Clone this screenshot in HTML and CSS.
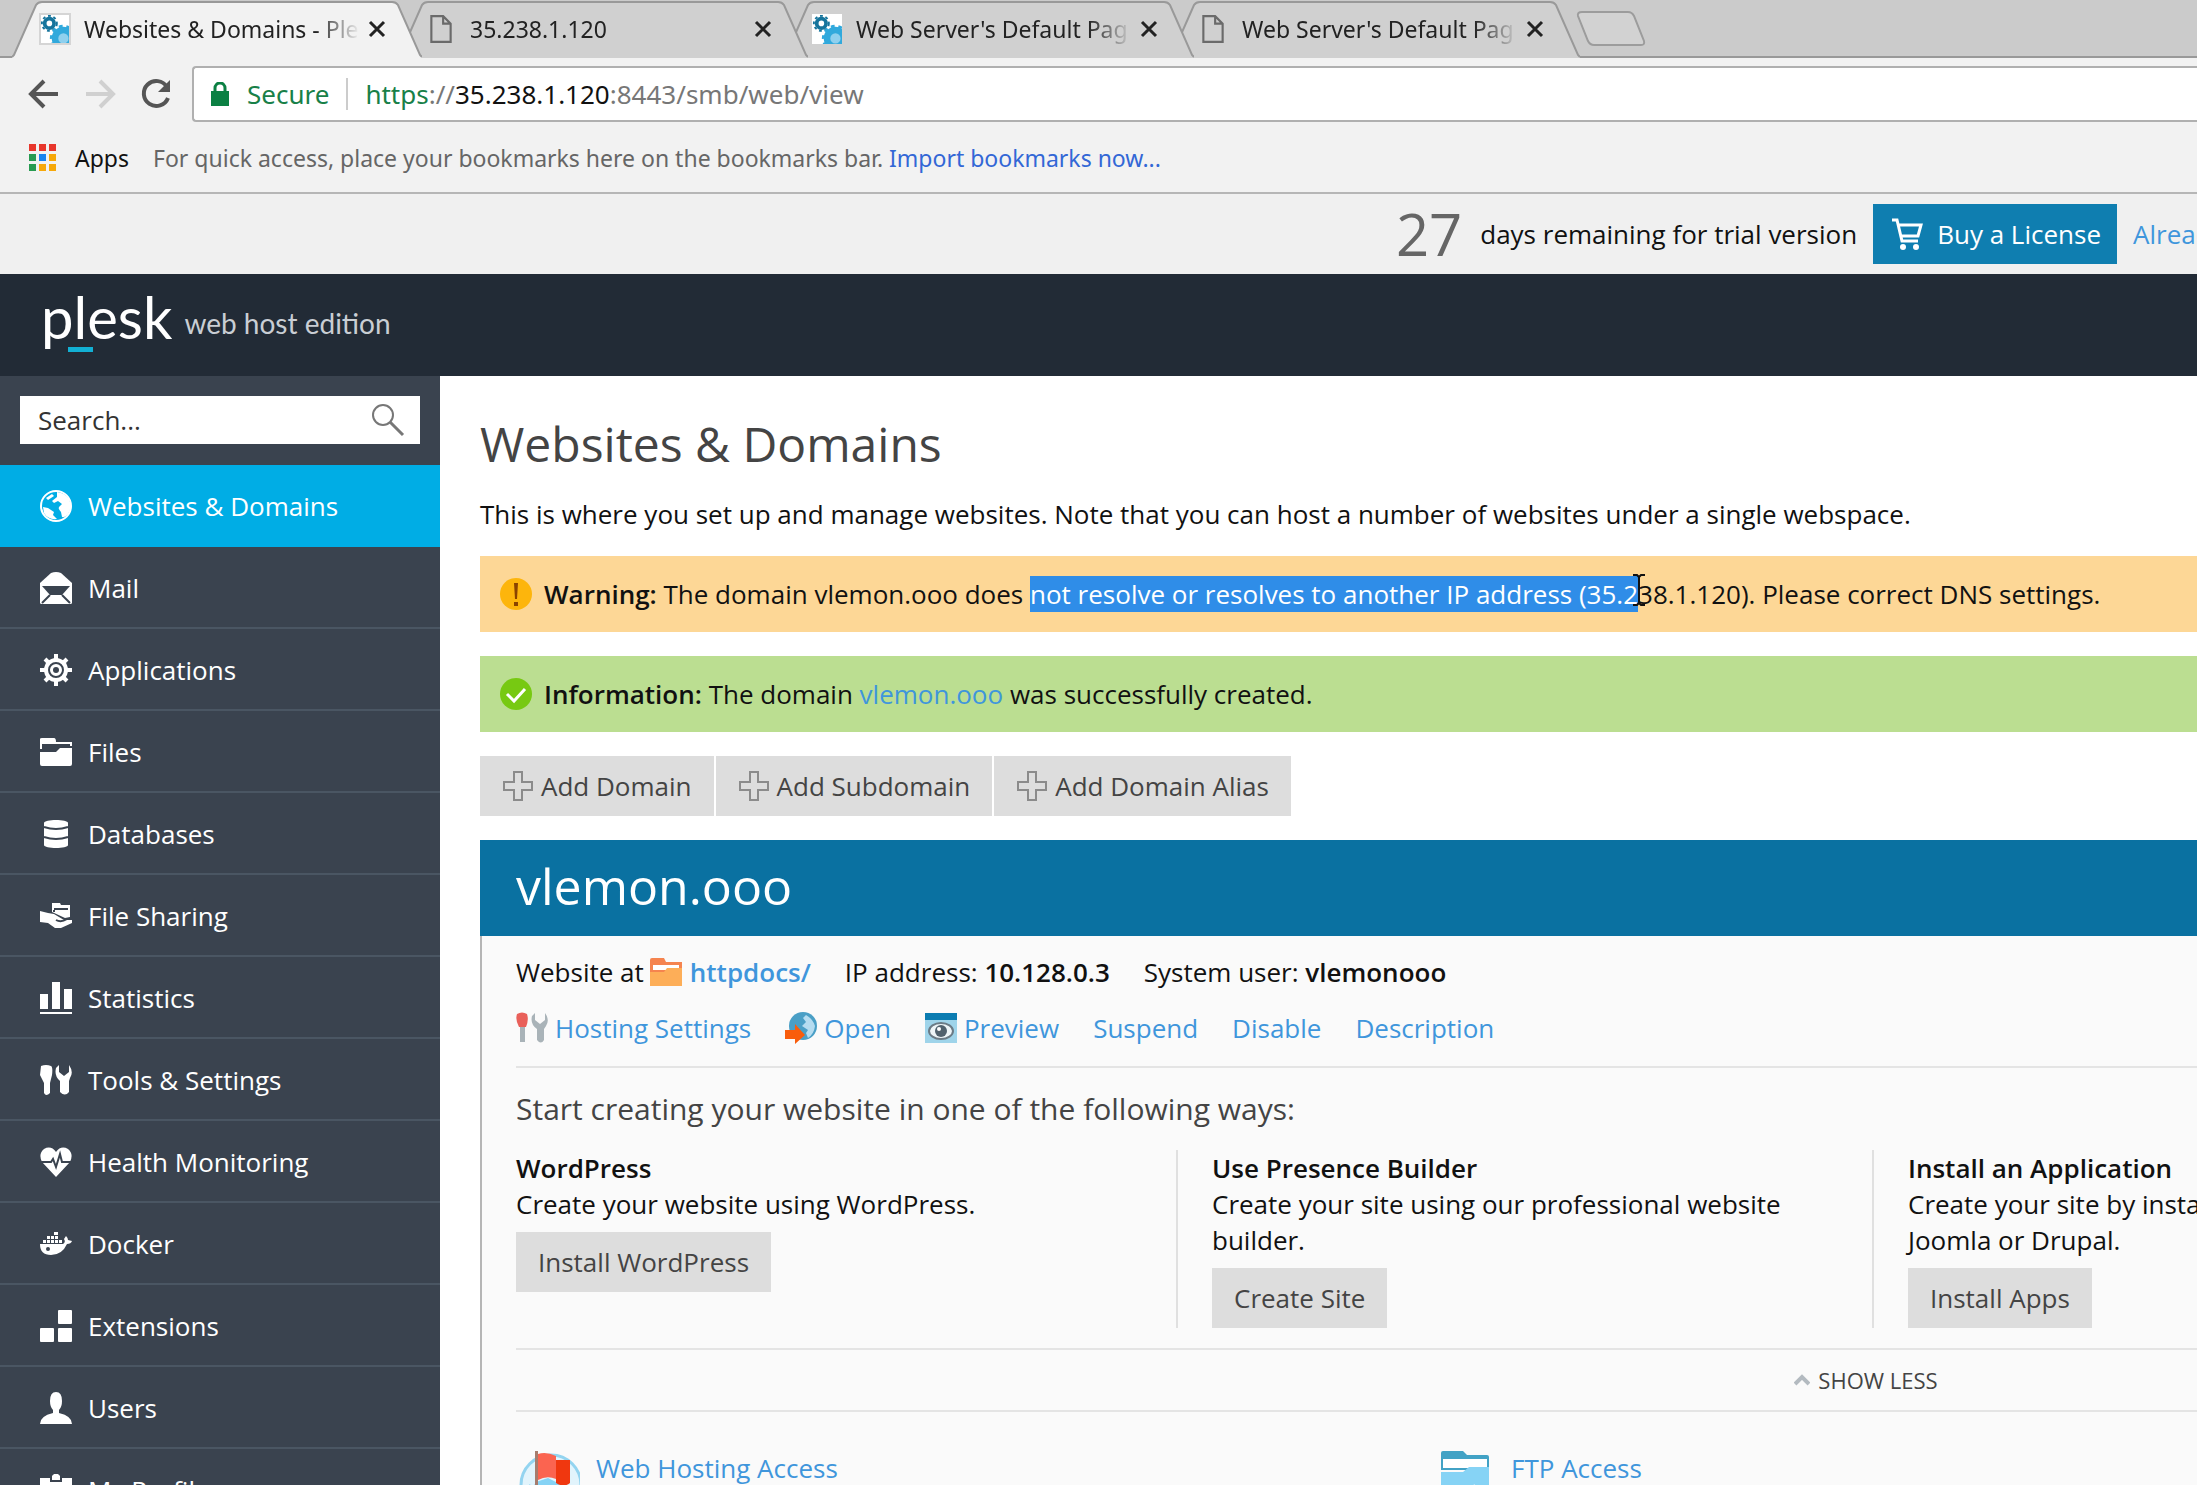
FILE: index.html
```html
<!DOCTYPE html>
<html lang="en">
<head>
<meta charset="utf-8">
<title>Websites &amp; Domains - Plesk</title>
<link rel="stylesheet" href="styles.css">
</head>
<body>
<svg class="sprite" aria-hidden="true">
  <symbol id="tab-shape" viewBox="0 0 410 58" preserveAspectRatio="none">
    <path d="M0 57 L2 55 L24 5 Q26 2 30 2 H380 Q384 2 386 5 L408 55 L410 57 V58 H0Z" fill="currentColor"/>
    <path d="M0 57 L2 55 L24 5 Q26 2 30 2 H380 Q384 2 386 5 L408 55 L410 57" fill="none" stroke="#999" stroke-width="2"/>
  </symbol>
  <symbol id="gears" viewBox="0 0 32 32">
    <path d="M0 0H32V32H0Z" fill="#fff"/>
    <circle cx="10" cy="10" r="5" fill="none" stroke="#15749c" stroke-width="4"/>
    <circle cx="10" cy="10" r="8" fill="none" stroke="#15749c" stroke-width="2" stroke-dasharray="3 3"/>
    <circle cx="25" cy="26" r="9" fill="#8fd0ee" stroke="#31a9dc" stroke-width="7"/>
    <circle cx="25" cy="26" r="13" fill="none" stroke="#31a9dc" stroke-width="3" stroke-dasharray="4 4"/>
  </symbol>
  <symbol id="page" viewBox="0 0 22 28"><path d="M2 2H13L20 9V26H2ZM13 2V9H20" fill="none" stroke="#6a6a6a" stroke-width="2"/></symbol>
  <symbol id="close" viewBox="0 0 18 18"><path d="M2 2L16 16M16 2L2 16" stroke="currentColor" stroke-width="3"/></symbol>
  <symbol id="plus" viewBox="0 0 32 32"><path d="M12 2H20V12H30V20H20V30H12V20H2V12H12Z" fill="none" stroke="#8b8b8b" stroke-width="2"/></symbol>
</svg>

<header class="browser">
  <div class="tabs">
    <div class="tab tab-active">
      <svg class="tab-bg"><use href="#tab-shape"/></svg>
      <svg class="fav fav-framed"><use href="#gears"/></svg>
      <span class="tab-title">Websites &amp; Domains - Ple</span>
      <button class="tab-close" aria-label="Close tab"><svg><use href="#close"/></svg></button>
    </div>
    <div class="tab">
      <svg class="tab-bg"><use href="#tab-shape"/></svg>
      <svg class="fav"><use href="#page"/></svg>
      <span class="tab-title">35.238.1.120</span>
      <button class="tab-close" aria-label="Close tab"><svg><use href="#close"/></svg></button>
    </div>
    <div class="tab">
      <svg class="tab-bg"><use href="#tab-shape"/></svg>
      <svg class="fav"><use href="#gears"/></svg>
      <span class="tab-title">Web Server's Default Pag</span>
      <button class="tab-close" aria-label="Close tab"><svg><use href="#close"/></svg></button>
    </div>
    <div class="tab">
      <svg class="tab-bg"><use href="#tab-shape"/></svg>
      <svg class="fav"><use href="#page"/></svg>
      <span class="tab-title">Web Server's Default Pag</span>
      <button class="tab-close" aria-label="Close tab"><svg><use href="#close"/></svg></button>
    </div>
    <button class="new-tab" aria-label="New tab"><svg viewBox="0 0 70 36"><path d="M6 1H52Q56 1 58 5L68 30Q69 34 65 34H18Q14 34 12 30L2 5Q1 1 6 1Z" fill="#d2d2d2" stroke="#9c9c9c" stroke-width="2"/></svg></button>
  </div>
  <div class="toolbar">
    <button class="nav-btn" aria-label="Back"><svg viewBox="0 0 32 32"><path d="M30 16H4M16 3L3 16L16 29" fill="none" stroke="#555" stroke-width="4"/></svg></button>
    <button class="nav-btn" aria-label="Forward"><svg viewBox="0 0 32 32"><path d="M2 16H28M16 3L29 16L16 29" fill="none" stroke="#d0d0d0" stroke-width="4"/></svg></button>
    <button class="nav-btn" aria-label="Reload"><svg viewBox="0 0 32 32"><path d="M27 9A12.500 12.500 0 1 0 28 20" fill="none" stroke="#555" stroke-width="4"/><path d="M30 2V14H18Z" fill="#555"/></svg></button>
    <div class="address">
      <svg class="lock" viewBox="0 0 18 24"><path d="M0 9H18V24H0Z" fill="#0b8043"/><path d="M4 10V6A5 5 0 0 1 14 6V10" fill="none" stroke="#0b8043" stroke-width="3"/></svg>
      <span class="secure">Secure</span>
      <span class="url"><span class="scheme">https</span>://<span class="host">35.238.1.120</span>:8443/smb/web/view</span>
    </div>
  </div>
  <div class="bookmarks">
    <svg class="apps" viewBox="0 0 28 28"><path d="M0 0H7V7H0ZM10 0H17V7H10ZM20 0H27V7H20Z" fill="#e8372c"/><path d="M0 10H7V17H0ZM0 20H7V27H0Z" fill="#279b51"/><path d="M10 10H17V17H10Z" fill="#1a84ee"/><path d="M20 10H27V17H20ZM10 20H17V27H10ZM20 20H27V27H20Z" fill="#f6a80a"/></svg>
    <span class="apps-label">Apps</span>
    <span class="hint">For quick access, place your bookmarks here on the bookmarks bar. <a href="#">Import bookmarks now...</a></span>
  </div>
</header>

<div class="trial">
  <span class="days">27</span>
  <span class="remaining">days remaining for trial version</span>
  <button class="buy"><svg viewBox="0 0 32 34"><path d="M1 3H6L11 24H27M7 8H30L27 19H10" fill="none" stroke="#fff" stroke-width="3"/><circle cx="12" cy="30" r="3" fill="#fff"/><circle cx="25" cy="30" r="3" fill="#fff"/></svg>Buy a License</button>
  <a class="already" href="#">Already have a license?</a>
</div>

<div class="brand">
  <span class="logo">p<span class="logo-l">l</span>esk</span>
  <span class="edition">web host edition</span>
</div>

<div class="body">
  <aside class="sidebar">
    <form class="search">
      <input type="text" placeholder="Search..." aria-label="Search">
      <svg viewBox="0 0 34 34"><circle cx="12" cy="12" r="10" fill="none" stroke="#777" stroke-width="2"/><path d="M19 19L32 32" stroke="#777" stroke-width="3"/></svg>
    </form>
    <nav>
      <a class="item current" href="#"><svg viewBox="0 0 32 32"><circle cx="16" cy="16" r="15" fill="none" stroke="#fff" stroke-width="2"/><path d="M17 2Q25 3 29 9Q32 16 29 22Q26 28 22 27L21 22Q17 18 20 16L22 14L18 11L14 13L12 11L17 7Z" fill="#fff"/><path d="M3 17L8 18L14 22L13 25L17 29Q8 30 4 23ZM6 8L12 4L14 6L8 10Z" fill="#fff"/></svg>Websites &amp; Domains</a>
      <a class="item" href="#"><svg viewBox="0 0 32 32"><path d="M0 11L11 1Q16 -1 21 1L32 11V31Q32 32 30 32H2Q0 32 0 31Z" fill="#fff"/><path d="M2 14H30L22 23H10Z" fill="#3a434f"/><path d="M10 23L2 31M22 23L30 31" stroke="#3a434f" stroke-width="2"/></svg>Mail</a>
      <a class="item" href="#"><svg viewBox="0 0 32 32"><g stroke="#fff" stroke-width="4"><path d="M16 0V32M0 16H32M5 5L27 27M27 5L5 27"/></g><circle cx="16" cy="16" r="12" fill="#fff"/><circle cx="16" cy="16" r="7" fill="#fff" stroke="#3a434f" stroke-width="2"/><circle cx="16" cy="16" r="3" fill="#3a434f"/></svg>Applications</a>
      <a class="item" href="#"><svg viewBox="0 0 32 32"><path d="M0 13V3Q0 2 2 2H14Q16 2 16 6H32V10H30V8H2V13Z" fill="#fff"/><path d="M0 16H16L20 12H32V28Q32 30 30 30H2Q0 30 0 28Z" fill="#fff"/></svg>Files</a>
      <a class="item" href="#"><svg viewBox="0 0 32 32"><path d="M4 5C4 1 28 1 28 5V27C28 31 4 31 4 27Z" fill="#fff"/><path d="M4 9Q16 13 28 9M4 19Q16 23 28 19" fill="none" stroke="#3a434f" stroke-width="2"/></svg>Databases</a>
      <a class="item" href="#"><svg viewBox="0 0 32 32"><path d="M0 11L8 13L14 14L24 20L32 20V23L21 28H15L8 23L0 22Z" fill="#fff"/><path d="M12 3H20L21 5H30V17L25 18L12 12Z" fill="#fff"/><path d="M14 9H28M14 10V12M16 20Q21 23 27 19" stroke="#3a434f" stroke-width="2" fill="none"/></svg>File Sharing</a>
      <a class="item" href="#"><svg viewBox="0 0 32 32"><path d="M0 12H8V27H0ZM12 0H20V27H12ZM24 7H32V27H24ZM0 30H32V32H0Z" fill="#fff"/></svg>Statistics</a>
      <a class="item" href="#"><svg viewBox="0 0 32 32"><path d="M1 2Q6 0 11 2Q13 3 12 11L10 19V29Q6 33 4 29V19L0 11ZM19 1V8L24 12L29 8V1Q34 8 30 14L29 17V28Q25 33 20 28V17Q14 12 16 4Z" fill="#fff"/></svg>Tools &amp; Settings</a>
      <a class="item" href="#"><svg viewBox="0 0 32 32"><path d="M16 31L2 16Q-2 8 4 3Q11 -1 16 6Q21 -1 28 3Q34 8 30 16Z" fill="#fff"/><path d="M1 16H11L13 13L16 21L20 8L22 16H31" fill="none" stroke="#3a434f" stroke-width="2"/></svg>Health Monitoring</a>
      <a class="item" href="#"><svg viewBox="0 0 32 32"><path d="M0 16H23Q26 14 24 11L26 8Q28 10 28 12L32 13Q31 16 27 16Q22 27 11 27Q0 27 0 16Z" fill="#fff"/><path d="M3 12H6V15H3ZM7 12H10V15H7ZM11 12H14V15H11ZM15 12H18V15H15ZM19 12H22V15H19ZM7 8H10V11H7ZM11 8H14V11H11ZM15 8H18V11H15ZM14 4H18V7H14Z" fill="#fff"/><circle cx="8" cy="21" r="2" fill="#3a434f"/></svg>Docker</a>
      <a class="item" href="#"><svg viewBox="0 0 32 32"><g fill="#fff"><rect x="18" y="0" width="14" height="14" rx="1"/><rect x="0" y="18" width="14" height="14" rx="1"/><rect x="18" y="18" width="14" height="14" rx="1"/></g></svg>Extensions</a>
      <a class="item" href="#"><svg viewBox="0 0 32 32"><path d="M16 0Q22 0 22 9Q22 15 19 18V21Q32 24 32 32H0Q0 24 13 21V18Q10 15 10 9Q10 0 16 0Z" fill="#fff"/></svg>Users</a>
      <a class="item" href="#"><svg viewBox="0 0 32 32"><path d="M0 4H10V8H22V4H32V32H0Z" fill="#fff"/><path d="M12 2Q16 -3 20 2V6H12Z" fill="#fff"/><path d="M4 12H28V28H4Z" fill="#3a434f"/></svg>My Profile</a>
    </nav>
  </aside>

  <main class="main">
    <h1>Websites &amp; Domains</h1>
    <p class="intro">This is where you set up and manage websites. Note that you can host a number of websites under a single webspace.</p>

    <div class="msg warning">
      <svg viewBox="0 0 32 32"><circle cx="16" cy="16" r="16" fill="#fdb50c"/><path d="M14 5H18L17 21H15ZM14 24H18V28H14Z" fill="#8a4300"/></svg>
      <p><b>Warning:</b> The domain vlemon.ooo does <span class="selected">not resolve or resolves to another IP address (35.2<svg class="ibeam" viewBox="0 0 14 32"><path d="M1 1H5L7 3L9 1H13M7 3V29M1 31H5L7 29L9 31H13" fill="none" stroke="#111" stroke-width="2"/></svg></span>38.1.120). Please correct DNS settings.</p>
    </div>
    <div class="msg info">
      <svg viewBox="0 0 32 32"><circle cx="16" cy="16" r="16" fill="#77c912"/><path d="M7 16L14 23L25 11" fill="none" stroke="#fff" stroke-width="3"/></svg>
      <p><b>Information:</b> The domain <a href="#">vlemon.ooo</a> was successfully created.</p>
    </div>

    <div class="actions">
      <button class="btn"><svg><use href="#plus"/></svg>Add Domain</button>
      <button class="btn"><svg><use href="#plus"/></svg>Add Subdomain</button>
      <button class="btn"><svg><use href="#plus"/></svg>Add Domain Alias</button>
    </div>

    <section class="domain">
      <h2>vlemon.ooo</h2>
      <div class="panel">
        <div class="facts">
          <span class="fact">Website at<svg viewBox="0 0 32 32"><path d="M0 4Q0 2 2 2H14L16 6H32V16H0Z" fill="#f5844f"/><path d="M3 9H29V14H3Z" fill="#fff"/><path d="M0 16H14L17 12H32V30H0Z" fill="#fdae58"/></svg><a href="#"><b>httpdocs/</b></a></span>
          <span class="fact">IP address: <b>10.128.0.3</b></span>
          <span class="fact">System user: <b>vlemonooo</b></span>
        </div>
        <div class="links">
          <a href="#"><svg viewBox="0 0 32 32"><path d="M1 2Q6 -1 11 2Q13 8 10 15H3Q-1 8 1 2Z" fill="#e9605a"/><path d="M4 15H9V30H4ZM19 1V8L24 12L29 8V1Q34 8 30 14L28 17V28Q25 33 21 28V17Q14 12 16 4Z" fill="#a9b3b8"/></svg>Hosting Settings</a>
          <a href="#"><svg viewBox="0 0 32 32"><circle cx="18" cy="14" r="14" fill="#4a9fc6"/><path d="M21 3Q28 7 30 14Q29 22 23 26L21 21L23 18L17 14L21 10L18 6Z" fill="#b5dcf0"/><path d="M0 18H10V12L20 23L10 32V27H0Z" fill="#f95d0c"/></svg>Open</a>
          <a href="#"><svg viewBox="0 0 32 32"><path d="M0 1H32V31H0Z" fill="#9fd4ea"/><path d="M0 1H32V8H0Z" fill="#0b7cb1"/><ellipse cx="16" cy="19" rx="12" ry="8" fill="#eef5f8" stroke="#6b7b86" stroke-width="2"/><circle cx="16" cy="19" r="6" fill="#51626e"/><circle cx="14" cy="17" r="2" fill="#fff"/></svg>Preview</a>
          <a href="#">Suspend</a>
          <a href="#">Disable</a>
          <a href="#">Description</a>
        </div>
        <h3>Start creating your website in one of the following ways:</h3>
        <div class="ways">
          <div class="way"><b>WordPress</b><p>Create your website using WordPress.</p><button class="btn">Install WordPress</button></div>
          <div class="way"><b>Use Presence Builder</b><p>Create your site using our professional website builder.</p><button class="btn">Create Site</button></div>
          <div class="way"><b>Install an Application</b><p>Create your site by installing apps like WordPress, Joomla or Drupal.</p><button class="btn">Install Apps</button></div>
        </div>
        <button class="less"><svg viewBox="0 0 16 12"><path d="M1 10L8 3L15 10" fill="none" stroke="#b3bac0" stroke-width="4"/></svg>SHOW LESS</button>
        <div class="tools">
          <a href="#"><svg viewBox="0 0 64 64"><circle cx="35" cy="35" r="30" fill="#e2f4fc" stroke="#93d4f0" stroke-width="3"/><path d="M20 32L32 28L44 34L52 48L36 64H24L12 46ZM8 40L14 34L18 46Z" fill="#86d3f5"/><path d="M19 1H22V64H19Z" fill="#a67c6d"/><path d="M22 4Q30 1 40 6V29Q31 25 22 30Z" fill="#fb6450"/><path d="M40 10H54V33Q48 38 40 33Z" fill="#f0370f"/></svg>Web Hosting Access</a>
          <a href="#"><svg viewBox="0 0 64 64"><path d="M10 3Q10 1 12 1H32L36 5H56Q58 5 58 7V20H10Z" fill="#42a2c5"/><path d="M12 9H56V18H12Z" fill="#fff"/><path d="M10 22H32L38 17H58V58H10Z" fill="#86d3f5"/><path d="M25 40L33 49L45 36" fill="none" stroke="#fff" stroke-width="5"/></svg>FTP Access</a>
        </div>
      </div>
    </section>
  </main>
</div>
</body>
</html>
```
FILE: styles.css
```css
* { box-sizing: border-box; }
body { margin: 0; height: 100vh; overflow: hidden; font: 26px/36px "Open Sans", sans-serif; color: #111; background: #fff; }
h1, h2, h3, p { margin: 0; font-weight: 400; }
b { font-weight: 600; }
a { color: #3f96dc; text-decoration: none; }
button { font: inherit; color: inherit; border: 0; padding: 0; background: none; }
svg { flex: none; }
.sprite { position: absolute; width: 0; height: 0; }

/* Browser window */
.browser { background: #f2f2f2; border-bottom: 2px solid #b6b6b6; font: 23px/32px "Noto Sans", sans-serif; }
.tabs { display: flex; height: 58px; padding-left: 12px; background: #cbcbcb; box-shadow: inset 0 -2px #999; }
.tab { position: relative; display: flex; align-items: center; width: 410px; height: 58px; padding: 0 36px 0 28px; color: #d0d0d0; }
.tab + .tab { margin-left: -24px; }
.tab:nth-child(1) { z-index: 4; }
.tab:nth-child(2) { z-index: 3; }
.tab:nth-child(3) { z-index: 2; }
.tab:nth-child(4) { z-index: 1; }
.tab-active { color: #f2f2f2; }
.tab-bg { position: absolute; left: 0; top: 0; width: 100%; height: 100%; z-index: -1; }
.fav { width: 30px; height: 30px; margin-right: 14px; }
.fav-framed { outline: 2px solid #d5d5d5; outline-offset: -1px; }
.tab-title { flex: 1; white-space: nowrap; min-width: 0; color: #222; mask-image: linear-gradient(to right, #000 calc(100% - 44px), transparent); }
.tab-close { margin-left: 8px; color: #222; display: flex; }
.tab-close svg { width: 18px; height: 18px; }
.new-tab { display: flex; align-items: center; margin: 0 0 0 -4px; }
.new-tab svg { width: 70px; height: 36px; }
.toolbar { display: flex; align-items: center; gap: 24px; padding: 8px 0 8px 28px; }
.nav-btn { display: flex; }
.nav-btn svg { width: 32px; height: 32px; }
.address { flex: 1; display: flex; align-items: center; height: 56px; margin-left: -4px; padding-left: 17px; background: #fff; border: 2px solid #b0b0b0; border-right: 0; border-radius: 4px 0 0 4px; font-size: 26px; }
.lock { width: 18px; height: 24px; margin-right: 18px; }
.secure { padding-right: 17px; border-right: 2px solid #ccc; color: #188048; }
.url { padding-left: 17px; color: #777; }
.scheme { color: #188048; }
.host { color: #111; }
.bookmarks { display: flex; align-items: center; height: 62px; padding: 0 0 6px 29px; }
.apps { width: 28px; height: 28px; margin-right: 18px; }
.apps-label { margin-right: 24px; }
.hint { color: #666; }
.hint a { color: #3367d6; }

/* Trial strip */
.trial { display: flex; justify-content: flex-end; align-items: center; height: 80px; background: #f0f0f0; }
.days { font-size: 58px; line-height: 60px; color: #666; margin-right: 18px; }
.remaining { margin-right: 16px; }
.buy { display: flex; align-items: center; gap: 14px; height: 60px; padding: 0 16px 0 18px; background: #0f7eb0; color: #fff; margin-right: 16px; }
.buy svg { width: 32px; height: 34px; }
.already { width: 64px; overflow: hidden; white-space: nowrap; }

/* Brand header */
.brand { display: flex; align-items: center; gap: 12px; height: 102px; padding: 0 0 4px 41px; background: #222b36; font-family: Lato, sans-serif; color: #fff; }
.logo { margin-bottom: 12px; font-size: 58px; line-height: 64px; }
.logo-l { position: relative; }
.logo-l::after { content: ""; position: absolute; left: -6px; right: -6px; bottom: -1px; height: 5px; background: #12b0d4; }
.edition { font-size: 28px; color: #c9ced4; }

/* Sidebar */
.body { display: flex; }
.sidebar { flex: none; width: 440px; background: #3a434f; }
.search { display: flex; align-items: center; height: 48px; margin: 20px 20px 21px; padding: 0 15px 0 18px; background: #fff; }
.search input { flex: 1; min-width: 0; padding: 0; border: 0; outline: 0; background: none; font: inherit; }
.search input::placeholder { color: #333; opacity: 1; }
.search svg { width: 34px; height: 34px; }
.item { display: flex; align-items: center; gap: 16px; height: 82px; padding: 2px 0 0 40px; border-bottom: 2px solid #4a5663; color: #fff; }
.item svg { width: 32px; height: 32px; }
.current { background: #00ade5; border-color: #00ade5; }

/* Page content */
.main { flex: 1; min-width: 0; padding: 35px 0 0 40px; overflow: hidden; }
h1 { font-size: 48px; line-height: 66px; color: #444; }
.intro { margin: 19px 0 24px; white-space: nowrap; }
.msg { display: flex; align-items: center; gap: 12px; height: 76px; margin-bottom: 24px; padding-left: 20px; white-space: nowrap; }
.msg > svg { width: 32px; height: 32px; }
.warning { background: #fdd796; }
.info { background: #bbde91; }
.selected { position: relative; display: inline-block; background: #2f8de8; color: #fff; }
.ibeam { position: absolute; right: -8px; top: -2px; width: 14px; height: 32px; z-index: 1; }
.actions { display: flex; gap: 2px; margin-bottom: 24px; }
.btn { display: flex; align-items: center; gap: 7px; height: 60px; padding: 0 22px; background: #ddd; color: #444; }
.btn svg { width: 32px; height: 32px; }
.domain { width: 2772px; }
h2 { padding: 13px 36px 17px; font-size: 50px; line-height: 66px; color: #fff; background: #0a71a1; }
.panel { padding: 18px 36px 0 34px; background: #fafafa; border-left: 2px solid #b5b5b5; }
.facts, .links { display: flex; gap: 34px; }
.fact, .links a { display: flex; align-items: center; white-space: pre; }
.links a { gap: 7px; }
.facts svg, .links svg { width: 32px; height: 32px; }
.facts svg { margin: 0 8px 0 6px; }
.links { margin-top: 20px; padding-bottom: 20px; border-bottom: 2px solid #e4e4e4; }
h3 { margin: 20px 0; font-size: 30px; line-height: 42px; color: #444; }
.ways { display: grid; grid-template-columns: repeat(4, 696px); padding-bottom: 20px; border-bottom: 2px solid #e4e4e4; }
.way { padding-right: 36px; }
.way + .way { margin-left: -36px; padding-left: 34px; border-left: 2px solid #e0e0e0; }
.way .btn { margin-top: 10px; }
.less { display: flex; align-items: center; justify-content: center; gap: 8px; width: 100%; height: 62px; border-bottom: 2px solid #e4e4e4; font-size: 22px; color: #444; }
.less svg { width: 16px; height: 12px; }
.tools { display: flex; padding-top: 38px; }
.tools a { display: flex; align-items: flex-start; gap: 16px; width: 915px; }
.tools svg { width: 64px; height: 64px; }
```
